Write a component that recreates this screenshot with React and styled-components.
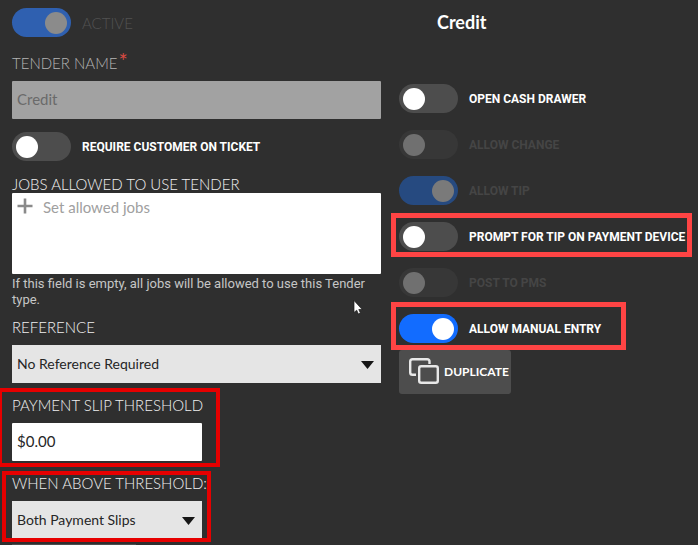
import React from "react";
import styled, { createGlobalStyle, css } from "styled-components";

const brand = `Lato, "Open Sans", sans-serif`;
const body = `Roboto, "Liberation Sans", sans-serif`;

const GlobalStyle = createGlobalStyle`
  *, *::before, *::after { box-sizing: border-box; }
  body { margin: 0; background: #2f2f2f; overflow: hidden; }
  button, input, select { margin: 0; font: inherit; }
`;

const Page = styled.main`
  position: relative;
  display: grid;
  grid-template-columns: 369fr 299fr;
  column-gap: 18px;
  padding: 8px 0 0 12px;
  background: #2f2f2f;
  color: #fff;
  font-family: ${body};
`;

const Column = styled.section`
  display: flex;
  flex-direction: column;
  align-items: stretch;
  min-width: 0;
`;

const outline = css`
  content: "";
  position: absolute;
  pointer-events: none;
`;

const ToggleRow = styled.label`
  position: relative;
  display: flex;
  align-items: center;
  gap: 11px;
  width: fit-content;
  height: 29px;
  font: ${(p) => (p.$light ? `300 15px ${brand}` : `700 12px ${body}`)};
  white-space: nowrap;
  color: ${(p) => (p.$light ? "#525252" : p.$dim ? "#454545" : "#fff")};

  ${(p) =>
    p.$marked &&
    css`
      &::after {
        ${outline}
        inset: ${p.$marked};
        border: 5px solid #ff4444;
      }
    `}
`;

const Switch = styled.input`
  appearance: none;
  display: flex;
  align-items: center;
  flex: none;
  width: 59px;
  height: 29px;
  margin: 0;
  padding: 0 4px;
  border-radius: 15px;
  background: #4d4d4d;

  &::before {
    content: "";
    width: 22px;
    height: 22px;
    border-radius: 50%;
    background: #fff;
  }
  &:checked { justify-content: flex-end; background: #126cff; }
  &:disabled { background: #373737; }
  &:disabled::before { background: #707070; }
  &:checked:disabled { background: ${(p) => (p.$bright ? "#2f60b0" : "#264a80")}; }
  &:checked:disabled::before { background: ${(p) => (p.$bright ? "#8b8b8b" : "#7a7a7a")}; }
`;

const Field = styled.div`
  position: relative;
  display: flex;
  flex-direction: column;
  width: ${(p) => (p.$short ? "190px" : "auto")};
  margin-top: ${(p) => p.$top}px;

  ${(p) =>
    p.$marked &&
    css`
      &::after {
        ${outline}
        inset: ${p.$marked};
        border: 4px solid #e60000;
      }
    `}
`;

const Caption = styled.label`
  display: flex;
  align-items: flex-start;
  height: ${(p) => (p.$tight ? "18px" : "27px")};
  font: 300 15px/18px ${brand};
  white-space: nowrap;
  color: ${(p) => (p.$dim ? "#b4b4b4" : "#f0f0f0")};
`;

const Required = styled.span`
  margin-left: 1px;
  font: 400 22px/14px ${brand};
  color: #d84a42;
`;

const TextBox = styled.input`
  width: 100%;
  height: 38px;
  padding: 0 5px 2px;
  border: 0;
  border-radius: 1px;
  font: 400 15px ${brand};
  color: #262626;
  background: #fff;

  &:disabled { color: #6a6a6a; background: #a2a2a2; }
`;

const JobsBox = styled.div`
  display: flex;
  align-items: flex-start;
  gap: 10px;
  height: 81px;
  padding: 4px 5px;
  border-radius: 1px;
  background: #fff;
`;

const AddButton = styled.button`
  display: flex;
  padding: 1px 0 0;
  border: 0;
  background: none;
  color: #8a8a8a;
`;

const JobsInput = styled.input`
  flex: 1;
  min-width: 0;
  height: 20px;
  padding: 0;
  border: 0;
  font: 400 15px/20px ${brand};
  background: none;

  &::placeholder { color: #a0a0a0; opacity: 1; }
`;

const Hint = styled.p`
  margin: 2px 0 0;
  font: 400 13px/16px ${body};
  color: #c6c6c6;
`;

const SelectWrap = styled.div`
  display: grid;
  align-items: center;

  > * { grid-area: 1 / 1; }
  > svg { justify-self: end; margin: 2px 7px 0 0; pointer-events: none; }
`;

const Select = styled.select`
  appearance: none;
  width: 100%;
  height: 38px;
  padding: 0 28px 2px 5px;
  border: 0;
  border-radius: 0;
  font: 400 14px ${brand};
  color: #262626;
  background: #e5e5e5;
`;

const NextPanel = styled.div`
  width: 124px;
  height: 1px;
  margin-top: 5px;
  background: #4d4d4d;
`;

const Title = styled.h1`
  margin: 0 0 48px 38px;
  font: 700 18px/28px ${brand};
`;

const Options = styled.div`
  display: flex;
  flex-direction: column;
  gap: 17px;
`;

const DuplicateButton = styled.button`
  display: flex;
  align-items: center;
  gap: 5px;
  width: fit-content;
  height: 44px;
  margin-top: 7px;
  padding: 0 2px 2px 10px;
  border: 0;
  border-radius: 3px;
  font: 700 12px ${brand};
  color: #fff;
  background: #4d4d4d;
`;

const Pointer = styled.svg`
  position: absolute;
  left: 353px;
  top: 300px;
  pointer-events: none;
`;

function Toggle({ label, on, disabled, light, marked }) {
  return (
    <ToggleRow $dim={disabled} $light={light} $marked={marked}>
      <Switch type="checkbox" role="switch" defaultChecked={on} disabled={disabled} $bright={light} />
      {label}
    </ToggleRow>
  );
}

function Dropdown({ id, value }) {
  return (
    <SelectWrap>
      <Select id={id} defaultValue={value}>
        <option>{value}</option>
      </Select>
      <svg width="13" height="8" viewBox="0 0 13 8" aria-hidden="true">
        <path d="M0 0H13L6.5 8Z" fill="#161616" />
      </svg>
    </SelectWrap>
  );
}

export default function App() {
  return (
    <>
      <GlobalStyle />
      <Page>
        <Column>
          <Toggle label="ACTIVE" on disabled light />
          <Field $top={17}>
            <Caption htmlFor="name" $dim>
              TENDER NAME<Required>*</Required>
            </Caption>
            <TextBox id="name" defaultValue="Credit" disabled />
          </Field>
          <Field $top={13}>
            <Toggle label="REQUIRE CUSTOMER ON TICKET" />
          </Field>
          <Field $top={14}>
            <Caption htmlFor="jobs" $tight>JOBS ALLOWED TO USE TENDER</Caption>
            <JobsBox>
              <AddButton type="button" aria-label="Add job">
                <svg width="16" height="16" viewBox="0 0 16 16" stroke="currentColor" strokeWidth="2.6">
                  <path d="M8 0.5V15.5M0.5 8H15.5" />
                </svg>
              </AddButton>
              <JobsInput id="jobs" placeholder="Set allowed jobs" />
            </JobsBox>
            <Hint>If this field is empty, all jobs will be allowed to use this Tender type.</Hint>
          </Field>
          <Field $top={10}>
            <Caption htmlFor="reference">REFERENCE</Caption>
            <Dropdown id="reference" value="No Reference Required" />
          </Field>
          <Field $top={13} $short $marked="-8px -18px -6px -14px">
            <Caption htmlFor="threshold">PAYMENT SLIP THRESHOLD</Caption>
            <TextBox id="threshold" defaultValue="$0.00" />
          </Field>
          <Field $top={13} $short $marked="-3px -9px -3px -10px">
            <Caption htmlFor="above">WHEN ABOVE THRESHOLD:</Caption>
            <Dropdown id="above" value="Both Payment Slips" />
          </Field>
          <NextPanel />
        </Column>
        <Column>
          <Title>Credit</Title>
          <Options>
            <Toggle label="OPEN CASH DRAWER" />
            <Toggle label="ALLOW CHANGE" disabled />
            <Toggle label="ALLOW TIP" on disabled />
            <Toggle label="PROMPT FOR TIP ON PAYMENT DEVICE" marked="-9px -7px -6px -8px" />
            <Toggle label="POST TO PMS" disabled />
            <Toggle label="ALLOW MANUAL ENTRY" on marked="-12px -25px -7px -8px" />
          </Options>
          <DuplicateButton type="button">
            <svg width="30" height="26" viewBox="0 0 30 26" fill="none" stroke="#e8e8e8" strokeWidth="2.4" aria-hidden="true">
              <path d="M20.5 6V3.5Q20.5 1.2 18.2 1.2H3.5Q1.2 1.2 1.2 3.5V14.5Q1.2 16.8 3.5 16.8H7" />
              <rect x="10.2" y="8.2" width="18.6" height="16.6" rx="2" />
            </svg>
            DUPLICATE
          </DuplicateButton>
        </Column>
        <Pointer width="10" height="15" viewBox="0 0 10 15" aria-hidden="true">
          <path d="M1 0.5V12.5L3.7 10.2L5.4 14L7.4 13.1L5.8 9.5H9.2Z" fill="#fff" stroke="#1a1a1a" strokeWidth=".7" />
        </Pointer>
      </Page>
    </>
  );
}
